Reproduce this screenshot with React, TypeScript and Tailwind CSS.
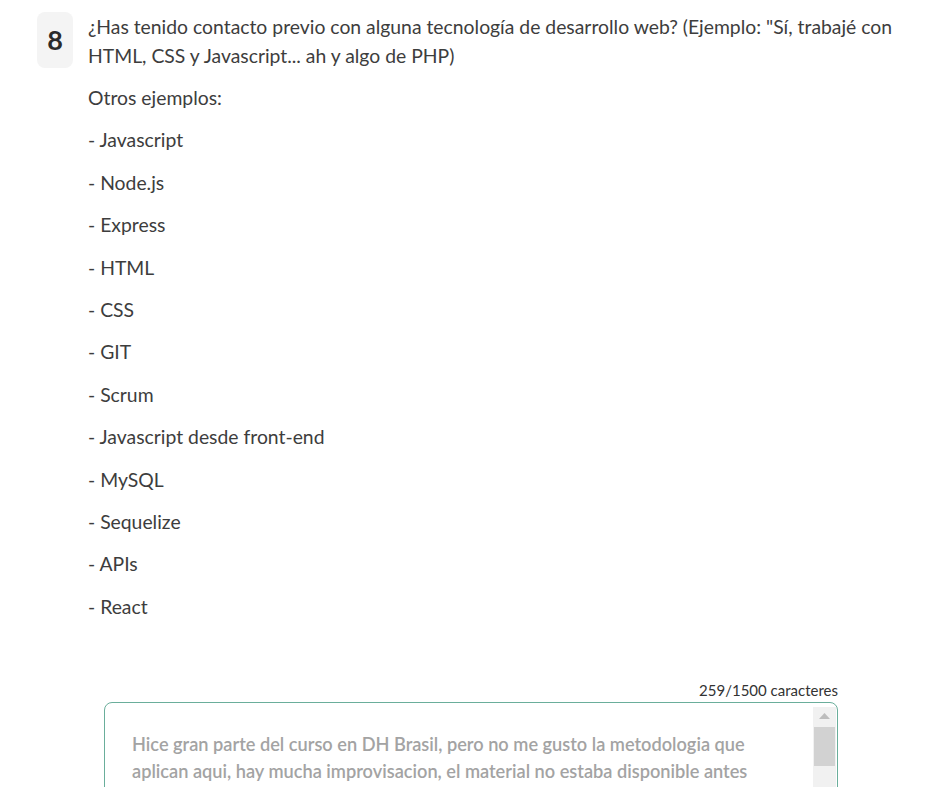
import React from 'react';

const items = [
  'Javascript',
  'Node.js',
  'Express',
  'HTML',
  'CSS',
  'GIT',
  'Scrum',
  'Javascript desde front-end',
  'MySQL',
  'Sequelize',
  'APIs',
  'React',
];

function App() {
  return (
    <div className="min-h-screen bg-white font-['Lato',sans-serif] text-[#3d3d3d] overflow-hidden h-[787px]">
      <div className="flex pt-[12px] pl-[37px]">
        <div className="w-[36px] h-[56px] shrink-0 rounded-lg bg-[#f4f4f4] flex justify-center pt-[14px] text-[27px] font-bold leading-none text-[#2b2b2b]">
          8
        </div>
        <div className="pl-[15px] w-[840px]">
          <p className="text-[19.35px] leading-[29px]">
            ¿Has tenido contacto previo con alguna tecnología de desarrollo web? (Ejemplo: "Sí, trabajé con HTML, CSS y Javascript... ah y algo de PHP)
          </p>
          <p className="text-[19.35px] leading-[29px] mt-[13px]">Otros ejemplos:</p>
          {items.map((it) => (
            <p key={it} className="text-[19.35px] leading-[29px] mt-[13.4px]">
              - {it}
            </p>
          ))}
        </div>
      </div>
      <div className="ml-[104px] w-[734px] mt-[59px]">
        <div className="text-right text-[15px] leading-[20px] text-[#333]">259/1500 caracteres</div>
        <div className="mt-[2px] h-[120px] border border-[#6aae9b] rounded-lg flex overflow-hidden">
          <div className="flex-1 pl-[27px] pr-[20px] pt-[28px] text-[18.2px] leading-[27px] font-semibold text-[#a3a3a3]">
            Hice gran parte del curso en DH Brasil, pero no me gusto la metodologia que aplican aqui, hay mucha improvisacion, el material no estaba disponible antes
          </div>
          <div className="w-[23px] bg-[#f1f1f1] mt-[4px] mr-[1px] flex flex-col items-center">
            <div className="pt-[6px] h-[20px]">
              <svg width="11" height="6" viewBox="0 0 11 6">
                <path d="M0 6 L5.5 0 L11 6 Z" fill="#bdbdbd" />
              </svg>
            </div>
            <div className="w-[21px] h-[39px] bg-[#d2d2d2]" />
          </div>
        </div>
      </div>
    </div>
  );
}

export default App;
